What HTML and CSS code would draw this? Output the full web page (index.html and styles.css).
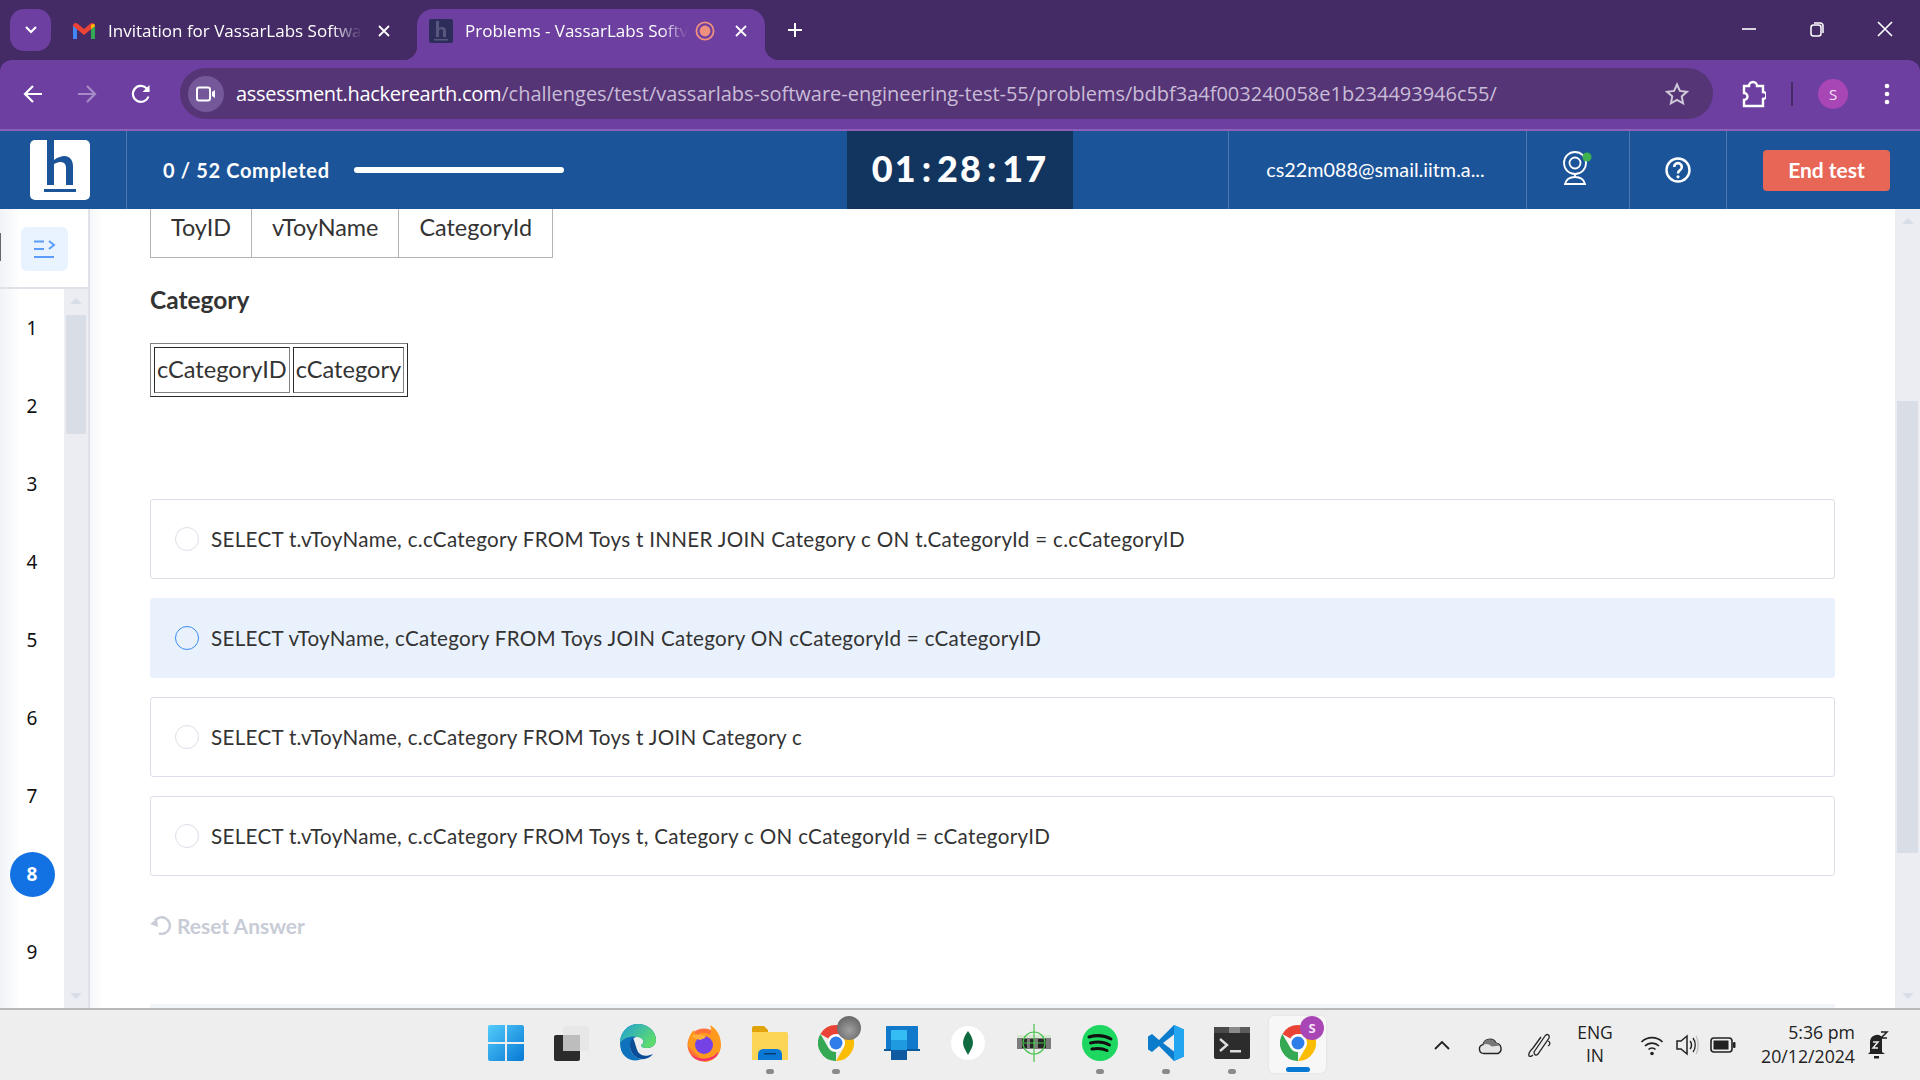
FILE: index.html
```html
<!DOCTYPE html>
<html lang="en">
<head>
<meta charset="utf-8">
<title>Problems - VassarLabs Software Engineering Test</title>
<link rel="stylesheet" href="styles.css">
</head>
<body>
<div class="tabstrip">
  <div class="tab-search"><svg width="14" height="10" viewBox="0 0 14 10"><path d="M2 2l5 5 5-5" fill="none" stroke="#fff" stroke-width="2.2"/></svg></div>
  <div class="tab">
    <svg class="tab-ico" width="24" height="18" viewBox="0 0 24 18"><path d="M1 17V4l4-1v14z" fill="#4285f4"/><path d="M23 17V4l-4-1v14z" fill="#34a853"/><path d="M1 4c0-3 3-4 5-2l6 5 6-5c2-2 5-1 5 2l-11 9z" fill="#ea4335"/><path d="M19 3c2-2 4-1 4 1l-4 3z" fill="#fbbc04"/></svg>
    <span class="tab-title">Invitation for VassarLabs Softwa</span>
    <svg class="tab-close" width="12" height="12" viewBox="0 0 12 12"><path d="M1 1l10 10M11 1L1 11" stroke="#fff" stroke-width="1.8"/></svg>
  </div>
  <div class="tab tab-active">
    <svg class="tab-ico" width="24" height="24" viewBox="0 0 24 24"><rect width="24" height="24" rx="2" fill="#2d2d5c"/><path d="M7 2h3v7c3-2 7-1 7 3v6h-3v-6c0-2-2-2-4-1v7H7z" fill="#58587f"/><rect x="5" y="20" width="14" height="1.500" fill="#58587f"/></svg>
    <span class="tab-title">Problems - VassarLabs Softv</span>
    <svg class="tab-rec" width="20" height="20" viewBox="0 0 20 20"><circle cx="10" cy="10" r="8.600" fill="none" stroke="#f0907f" stroke-width="1.800"/><circle cx="10" cy="10" r="5.400" fill="#f0907f"/></svg>
    <svg class="tab-close" width="12" height="12" viewBox="0 0 12 12"><path d="M1 1l10 10M11 1L1 11" stroke="#fff" stroke-width="1.8"/></svg>
  </div>
  <svg class="new-tab" width="18" height="18" viewBox="0 0 18 18"><path d="M9 2v14M2 9h14" stroke="#fff" stroke-width="2"/></svg>
  <div class="win-controls">
    <svg width="16" height="16" viewBox="0 0 16 16"><path d="M1 8h14" stroke="#fff" stroke-width="1.6"/></svg>
    <svg width="16" height="16" viewBox="0 0 16 16"><rect x="2" y="4" width="10" height="11" rx="2.500" fill="none" stroke="#fff" stroke-width="1.500"/><path d="M5 2h6a3 3 0 0 1 3 3v7" fill="none" stroke="#fff" stroke-width="1.500"/></svg>
    <svg width="16" height="16" viewBox="0 0 16 16"><path d="M1 1l14 14M15 1L1 15" stroke="#fff" stroke-width="1.6"/></svg>
  </div>
</div>

<div class="toolbar">
  <div class="nav">
    <svg width="22" height="22" viewBox="0 0 22 22"><path d="M20 11H3M11 3l-8 8 8 8" fill="none" stroke="#fff" stroke-width="2.2"/></svg>
    <svg width="22" height="22" viewBox="0 0 22 22"><path d="M2 11h17M11 3l8 8-8 8" fill="none" stroke="#a68cc6" stroke-width="2.2"/></svg>
    <svg width="22" height="22" viewBox="0 0 22 22"><path d="M18.500 13.500A8 8 0 1 1 16.500 5.200L19 8" fill="none" stroke="#fff" stroke-width="2.2"/><path d="M19.500 2v7h-7" fill="#fff"/></svg>
  </div>
  <div class="omnibox">
    <div class="cam"><svg width="20" height="16" viewBox="0 0 20 16"><rect x="1" y="1.500" width="13" height="13" rx="2" fill="none" stroke="#fff" stroke-width="2"/><path d="M16 6l3-2v8l-3-2z" fill="#fff"/></svg></div>
    <div class="url"><span class="url-host">assessment.hackerearth.com</span><span class="url-path">/challenges/test/vassarlabs-software-engineering-test-55/problems/bdbf3a4f003240058e1b234493946c55/</span></div>
    <svg class="star" width="24" height="24" viewBox="0 0 24 24"><path d="M12 2.500l2.900 6.400 7 .8-5.200 4.700 1.400 6.900-6.100-3.500-6.100 3.500 1.400-6.900-5.200-4.700 7-.8z" fill="none" stroke="#cfc8d8" stroke-width="2"/></svg>
  </div>
  <div class="tool-right">
    <svg class="ext" width="26" height="28" viewBox="0 0 26 28"><path d="M4 6h5a4 4 0 0 1 8 0h6v6a3.500 3.500 0 0 1 0 7v7H4v-6a3 3 0 0 0 0-7z" fill="none" stroke="#fff" stroke-width="2.400"/></svg>
    <span class="tool-sep"></span>
    <span class="avatar">S</span>
    <svg class="dots" width="6" height="22" viewBox="0 0 6 22"><circle cx="3" cy="3" r="2.300" fill="#fff"/><circle cx="3" cy="11" r="2.300" fill="#fff"/><circle cx="3" cy="19" r="2.300" fill="#fff"/></svg>
  </div>
</div>

<header class="app-header">
  <div class="logo-cell">
    <svg width="60" height="60" viewBox="0 0 60 60"><rect width="60" height="60" rx="5" fill="#fff"/><path d="M17 0h7v20c4-3 8-4 10-4 6 0 9 4 9 11v18h-7V28c0-4-2-6-6-6-2 0-4 1-6 2v21h-7z" fill="#1c5499"/><rect x="14" y="49" width="32" height="3" fill="#1c5499"/></svg>
  </div>
  <div class="progress-cell">
    <span class="progress-text">0 / 52 Completed</span>
    <span class="progress-bar"></span>
  </div>
  <div class="timer">01 : 28 : 17</div>
  <div class="spacer"></div>
  <div class="cell cell-email">cs22m088@smail.iitm.a...</div>
  <div class="cell cell-cam">
    <svg width="30" height="36" viewBox="0 0 30 36"><circle cx="12" cy="13" r="11" fill="none" stroke="#fff" stroke-width="1.800"/><circle cx="12" cy="13" r="5.500" fill="none" stroke="#fff" stroke-width="1.800"/><path d="M12 24v3M2 34c1-4 4-7 10-7s9 3 10 7z" fill="none" stroke="#fff" stroke-width="1.800"/><circle cx="24" cy="7" r="4.500" fill="#3fb24f"/></svg>
  </div>
  <div class="cell cell-help">
    <svg width="26" height="26" viewBox="0 0 26 26"><circle cx="13" cy="13" r="11.500" fill="none" stroke="#fff" stroke-width="2.400"/><path d="M9.200 10a3.800 3.800 0 1 1 5.800 3.200c-1.400.9-2 1.500-2 3.300" fill="none" stroke="#fff" stroke-width="2.600"/><circle cx="13" cy="19.800" r="1.600" fill="#fff"/></svg>
  </div>
  <div class="cell-end"><button class="end-btn">End test</button></div>
</header>

<div class="main">
  <aside class="sidebar">
    <div class="side-top">
      <div class="side-mark"></div>
      <div class="side-toggle"><svg width="22" height="18" viewBox="0 0 22 18"><path d="M0 1.500h10M0 9h10M0 17h20M15 1l5 4-5 4" fill="none" stroke="#5a9dfa" stroke-width="2"/></svg></div>
    </div>
    <div class="side-list">
      <ol class="q-nums">
        <li class="q-num">1</li>
        <li class="q-num">2</li>
        <li class="q-num">3</li>
        <li class="q-num">4</li>
        <li class="q-num">5</li>
        <li class="q-num">6</li>
        <li class="q-num">7</li>
        <li class="q-num q-current"><span>8</span></li>
        <li class="q-num">9</li>
      </ol>
      <div class="scroll scroll-side">
        <i class="arrow-up"></i>
        <b class="thumb thumb-side"></b>
        <i class="arrow-down"></i>
      </div>
    </div>
  </aside>

  <main class="content">
    <table class="toys">
      <tr><td>ToyID</td><td>vToyName</td><td>CategoryId</td></tr>
    </table>
    <h4 class="tbl-title">Category</h4>
    <table class="cat">
      <tr><td>cCategoryID</td><td>cCategory</td></tr>
    </table>
    <div class="options">
      <label class="opt"><span class="radio"></span>SELECT t.vToyName, c.cCategory FROM Toys t INNER JOIN Category c ON t.CategoryId = c.cCategoryID</label>
      <label class="opt opt-selected"><span class="radio"></span>SELECT vToyName, cCategory FROM Toys JOIN Category ON cCategoryId = cCategoryID</label>
      <label class="opt"><span class="radio"></span>SELECT t.vToyName, c.cCategory FROM Toys t JOIN Category c</label>
      <label class="opt"><span class="radio"></span>SELECT t.vToyName, c.cCategory FROM Toys t, Category c ON cCategoryId = cCategoryID</label>
    </div>
    <div class="reset">
      <svg width="22" height="20" viewBox="0 0 22 20"><path d="M5 5.500A8.300 8.300 0 1 1 9 18.500" fill="none" stroke="#c8ccd6" stroke-width="2.400"/><path d="M0 9l7-5 1 8z" fill="#c8ccd6"/></svg>
      <span>Reset Answer</span>
    </div>
    <div class="next-band"></div>
  </main>

  <div class="scroll scroll-main">
    <i class="arrow-up"></i>
    <b class="thumb thumb-main"></b>
    <i class="arrow-down"></i>
  </div>
</div>

<footer class="taskbar">
  <div class="task-icons">
    <div class="ti"><svg width="36" height="36" viewBox="0 0 36 36"><defs><linearGradient id="w" x1="0" y1="0" x2="1" y2="1"><stop offset="0" stop-color="#53ccfb"/><stop offset="1" stop-color="#0678d4"/></linearGradient></defs><path d="M0 2a2 2 0 0 1 2-2h15v17H0zM19 0h15a2 2 0 0 1 2 2v15H19zM0 19h17v17H2a2 2 0 0 1-2-2zM19 19h17v15a2 2 0 0 1-2 2H19z" fill="url(#w)"/></svg></div>
    <div class="ti"><svg width="36" height="36" viewBox="0 0 36 36"><rect x="0" y="10" width="26" height="26" rx="2" fill="#2b2b2b"/><rect x="9" y="1" width="26" height="25" rx="2" fill="#e6e6e6" fill-opacity=".9"/><rect x="9" y="10" width="17" height="16" fill="#bdbdbd"/></svg></div>
    <div class="ti"><svg width="36" height="38" viewBox="0 0 36 38"><defs><linearGradient id="e" x1="0" y1="0" x2="1" y2=".6"><stop offset="0" stop-color="#1f9fd8"/><stop offset="1" stop-color="#5fdc6c"/></linearGradient></defs><path d="M0 19C0 8 8 0 18 0c10 0 18 7 18 16 0 5-4 8-9 8-4 0-6-1-6-3 2-1 3-3 2-5-2-4-7-4-10-1C8 20 10 29 16 33c2 1 4 2 6 2C14 39 0 35 0 19z" fill="#0f72bd"/><path d="M0 19C0 8 8 0 18 0c10 0 18 7 18 16 0 5-4 8-9 8-4 0-6-1-6-3 2-1 3-3 2-5-4-5-17-5-23 3z" fill="url(#e)"/><path d="M13 14c-5 3-4 15 3 19 6 4 13 2 17-3-7 3-12 2-15-2-2-4-3-10-5-14z" fill="#0a4d96"/></svg></div>
    <div class="ti"><svg width="36" height="38" viewBox="0 0 36 38"><circle cx="18" cy="21" r="16.500" fill="#ff7139"/><path d="M2 22C2 12 6 8 8 6c0 3 2 5 4 5 3-3 9-3 12 0 2-3 1-7 0-10 7 4 11 11 11 20 0 10-8 17-17 17z" fill="#ff9a1f"/><path d="M5 30c6 6 20 7 27-2 1 3-5 9-14 9-6 0-11-3-13-7z" fill="#f2306f"/><circle cx="18" cy="21" r="9" fill="#7542e5"/><path d="M6 12c4-2 10-2 14 1-2 2-5 2-6 3-2-1-5-1-8-4z" fill="#ffb13b"/></svg></div>
    <div class="ti ti-running"><svg width="36" height="34" viewBox="0 0 36 34"><path d="M0 2a2 2 0 0 1 2-2h10l4 4v5H0z" fill="#e0a408"/><path d="M0 6h34a2 2 0 0 1 2 2v26H0z" fill="#fdd556"/><path d="M6 34v-5c0-4 2-6 6-6h12c4 0 6 2 6 6v5z" fill="#0a78d4"/><rect x="12" y="27" width="12" height="1.500" fill="#0a3d70"/></svg></div>
    <div class="ti ti-running ti-chrome">
      <svg width="36" height="36" viewBox="0 0 36 36"><path d="M18 0A18 18 0 0 1 33.600 9H18A9 9 0 0 0 10.200 13.500L2.400 9A18 18 0 0 1 18 0z" fill="#ea4335"/><path d="M18 0A18 18 0 0 1 33.600 9H18A9 9 0 0 0 10.200 13.500L2.400 9A18 18 0 0 1 18 0z" fill="#fbbc04" transform="rotate(120 18 18)"/><path d="M18 0A18 18 0 0 1 33.600 9H18A9 9 0 0 0 10.200 13.500L2.400 9A18 18 0 0 1 18 0z" fill="#34a853" transform="rotate(240 18 18)"/><circle cx="18" cy="18" r="8.500" fill="#fff"/><circle cx="18" cy="18" r="6.500" fill="#2f7de8"/></svg>
      <span class="ti-badge ti-badge-gray"></span>
    </div>
    <div class="ti"><svg width="36" height="34" viewBox="0 0 36 34"><path d="M2 1a1 1 0 0 1 1-1h30a1 1 0 0 1 1 1v23H2z" fill="#1079c9"/><rect x="0" y="23" width="36" height="2" fill="#0b5a9e"/><rect x="7" y="4" width="16" height="30" rx="1" fill="#34bdf4"/><rect x="7" y="14" width="16" height="10" fill="#1e9be0"/><rect x="7" y="24" width="16" height="10" fill="#0f5aa0"/></svg></div>
    <div class="ti"><svg width="36" height="36" viewBox="0 0 36 36"><circle cx="18" cy="18" r="17" fill="#fff"/><path d="M18 6c3 4 5 8 5 12s-3 8-5 12c-2-4-5-8-5-12s2-8 5-12z" fill="#0e6b40"/></svg></div>
    <div class="ti"><svg width="36" height="38" viewBox="0 0 36 38"><path d="M1 14h34v11H1z" fill="#7c7c7c"/><path d="M1 11h34v3H1z" fill="#d8e8d0"/><path d="M6 15h5v9H6zM14 15h4v9h-4zM22 15h8v9h-8z" fill="#262626"/><circle cx="18" cy="19" r="11" fill="none" stroke="#49c34f" stroke-width="1.200"/><path d="M18 0v38M8 19h20" stroke="#49c34f" stroke-width="1.200"/></svg></div>
    <div class="ti ti-running"><svg width="36" height="36" viewBox="0 0 36 36"><circle cx="18" cy="18" r="18" fill="#1ed760"/><path d="M7 12c7-2 15-2 22 2M8.500 18c6-1.500 13-1.500 19 2M10 24c5-1 10-1 15 1.500" fill="none" stroke="#111" stroke-width="3" stroke-linecap="round"/></svg></div>
    <div class="ti ti-running"><svg width="36" height="36" viewBox="0 0 36 36"><path d="M26 0l10 4.500v27L26 36 11 21l-7 6-4-2.500v-13L4 9l7 6z" fill="#0a7ccb"/><path d="M26 0l10 4.500v27L26 36z" fill="#24a5f0"/><path d="M26 9.500L15 18l11 8.500z" fill="#efefef"/></svg></div>
    <div class="ti ti-running"><svg width="36" height="32" viewBox="0 0 36 32"><rect width="36" height="32" rx="2" fill="#2c2c2c"/><rect x="0" width="15" height="6" fill="#4a4a4a"/><rect x="15" width="11" height="6" fill="#8a8a8a"/><rect x="26" width="10" height="6" fill="#5c5c5c"/><path d="M6 12l7 6-7 6" fill="none" stroke="#ddd" stroke-width="2.400"/><rect x="16" y="23" width="11" height="2.500" fill="#ddd"/></svg></div>
    <div class="ti ti-active">
      <svg width="36" height="36" viewBox="0 0 36 36"><path d="M18 0A18 18 0 0 1 33.600 9H18A9 9 0 0 0 10.200 13.500L2.400 9A18 18 0 0 1 18 0z" fill="#ea4335"/><path d="M18 0A18 18 0 0 1 33.600 9H18A9 9 0 0 0 10.200 13.500L2.400 9A18 18 0 0 1 18 0z" fill="#fbbc04" transform="rotate(120 18 18)"/><path d="M18 0A18 18 0 0 1 33.600 9H18A9 9 0 0 0 10.200 13.500L2.400 9A18 18 0 0 1 18 0z" fill="#34a853" transform="rotate(240 18 18)"/><circle cx="18" cy="18" r="8.500" fill="#fff"/><circle cx="18" cy="18" r="6.500" fill="#2f7de8"/></svg>
      <span class="ti-badge ti-badge-s">S</span>
    </div>
  </div>
  <div class="tray">
    <svg class="tr-chev" width="18" height="12" viewBox="0 0 18 12"><path d="M2 10l7-7 7 7" fill="none" stroke="#222" stroke-width="1.800"/></svg>
    <svg class="tr-cloud" width="26" height="20" viewBox="0 0 26 20"><path d="M6 18.500a4.500 4.500 0 0 1-1-8.900 7 7 0 0 1 13-1.500 5.500 5.500 0 0 1 2 10.400z" fill="#e4e4e4" stroke="#222" stroke-width="1.400"/><path d="M5 9.600a7 7 0 0 1 13-1.500c2 .3 3 1.200 4 2.400l-8 1-3-2c-2-1-4-.5-6 .1z" fill="#777"/></svg>
    <svg class="tr-pen" width="26" height="28" viewBox="0 0 26 28"><path d="M7 21L18 5c2-3 5-1 4 2L11 23c-2 2-4 1-4-2zM6 24c-2 2-5 2-4-1 0-2 2-4 4-6L14 6M21 10c3 1 2 4 0 5" fill="none" stroke="#222" stroke-width="1.300"/></svg>
    <div class="tr-lang"><span>ENG</span><span>IN</span></div>
    <div class="tr-sys">
      <svg width="24" height="22" viewBox="0 0 24 22"><path d="M1.500 8a15 15 0 0 1 21 0M5 12a10 10 0 0 1 14 0M8.500 15.500a5 5 0 0 1 7 0" fill="none" stroke="#222" stroke-width="1.700"/><circle cx="12" cy="19.500" r="1.800" fill="#222"/></svg>
      <svg width="24" height="24" viewBox="0 0 24 24"><path d="M2 8h4l6-5v18l-6-5H2z" fill="none" stroke="#222" stroke-width="1.500"/><path d="M15 8c2 2 2 6 0 8" fill="none" stroke="#222" stroke-width="1.500"/><path d="M18 5c3 4 3 10 0 14" fill="none" stroke="#222" stroke-width="1.300"/><path d="M21 3c3 5 3 13 0 18" fill="none" stroke="#bbb" stroke-width="1.200"/></svg>
      <svg width="26" height="16" viewBox="0 0 26 16"><rect x="1" y="1" width="21" height="14" rx="3" fill="none" stroke="#222" stroke-width="1.600"/><rect x="3.500" y="3.500" width="15" height="9" fill="#222"/><rect x="23" y="5" width="2.500" height="6" rx="1" fill="#222"/></svg>
    </div>
    <div class="tr-clock"><span>5:36 pm</span><span>20/12/2024</span></div>
    <svg class="tr-bell" width="22" height="30" viewBox="0 0 22 30"><path d="M3 22V12a7 7 0 0 1 12-5v15l3 2H1z" fill="#222"/><rect x="7" y="26" width="5" height="2.500" fill="#222"/><path d="M14 2h6l-6 6h6" fill="none" stroke="#222" stroke-width="1.500"/><path d="M6 12h5l-5 6h5" fill="none" stroke="#eee" stroke-width="1.500"/></svg>
  </div>
</footer>
</body>
</html>
```

FILE: styles.css
```css
* { box-sizing: border-box; }
html, body { margin: 0; padding: 0; }
body {
  width: 1920px;
  height: 1080px;
  overflow: hidden;
  display: flex;
  flex-direction: column;
  font-family: "Lato", "Liberation Sans", sans-serif;
  background: #452b66;
}

/* browser tab strip */
.tabstrip {
  height: 60px;
  flex: none;
  background: #452b66;
  display: flex;
  align-items: flex-start;
  padding: 9px 0 0 10px;
  font-family: "Open Sans", "Liberation Sans", sans-serif;
}
.tab-search {
  width: 41px;
  height: 42px;
  border-radius: 14px;
  background: #6c3fa0;
  display: flex;
  align-items: center;
  justify-content: center;
  margin-right: 21px;
}
.tab {
  width: 345px;
  height: 51px;
  flex: none;
  display: flex;
  align-items: center;
  color: #fff;
  padding: 0 27px 8px 0;
}
.tab-ico { flex: none; }
.tab-title {
  white-space: nowrap;
  font-size: 17px;
  margin-left: 12px;
  -webkit-mask-image: linear-gradient(90deg, #000 88%, transparent 100%);
  mask-image: linear-gradient(90deg, #000 88%, transparent 100%);
}
.tab-close { flex: none; margin-left: auto; }
.tab-active {
  width: 348px;
  position: relative;
  background: #6c3fa0;
  border-radius: 16px 16px 0 0;
  padding: 0 18px 8px 12px;
  margin-right: 21px;
}
.tab-active::before,
.tab-active::after {
  content: "";
  position: absolute;
  bottom: 0;
  width: 14px;
  height: 14px;
}
.tab-active::before {
  left: -14px;
  background: radial-gradient(circle at 0 0, transparent 14px, #6c3fa0 14.5px);
}
.tab-active::after {
  right: -14px;
  background: radial-gradient(circle at 100% 0, transparent 14px, #6c3fa0 14.5px);
}
.tab-active .tab-title { margin-left: 12px; }
.tab-rec { flex: none; margin-left: auto; }
.tab-active .tab-close { margin-left: 20px; }
.new-tab { margin-top: 12px; flex: none; }
.win-controls {
  margin-left: auto;
  display: flex;
  gap: 52px;
  padding: 12px 27px 0 0;
}

/* browser toolbar */
.toolbar {
  height: 71px;
  flex: none;
  background: #6c3fa0;
  border-bottom: 2px solid #8d5fb6;
  border-radius: 12px 12px 0 0;
  display: flex;
  align-items: center;
  padding: 0 0 2px 22px;
  font-family: "Open Sans", "Liberation Sans", sans-serif;
}
.nav {
  display: flex;
  gap: 32px;
  width: 158px;
  flex: none;
}
.omnibox {
  width: 1533px;
  height: 51px;
  flex: none;
  border-radius: 26px;
  background: #553575;
  display: flex;
  align-items: center;
  padding: 0 24px 0 8px;
}
.cam {
  width: 36px;
  height: 36px;
  border-radius: 50%;
  background: #75589a;
  display: flex;
  align-items: center;
  justify-content: center;
  flex: none;
}
.url {
  margin-left: 12px;
  font-size: 20px;
  white-space: nowrap;
  flex: 1;
}
.url-host { color: #fff; letter-spacing: -.3px; }
.url-path { color: #c9bcd8; letter-spacing: -.01px; }
.star { flex: none; }
.tool-right {
  flex: 1;
  display: flex;
  align-items: center;
  padding-left: 27px;
}
.ext { flex: none; }
.tool-sep { width: 2px; height: 24px; background: #452b66; margin-left: 25px; }
.avatar {
  width: 30px;
  height: 30px;
  border-radius: 50%;
  background: #a946b6;
  color: #f5e2f7;
  font-size: 15px;
  display: flex;
  align-items: center;
  justify-content: center;
  margin-left: 25px;
}
.dots { margin-left: 36px; flex: none; }

/* app header */
.app-header {
  height: 78px;
  flex: none;
  background: #1c5499;
  display: flex;
  color: #fff;
}
.logo-cell {
  width: 127px;
  flex: none;
  border-right: 1px solid #4b78b0;
  padding: 9px 0 0 30px;
}
.progress-cell {
  width: 720px;
  flex: none;
  display: flex;
  align-items: center;
  padding: 0 0 1px 36px;
  gap: 24px;
}
.progress-text { font-size: 20px; font-weight: 700; letter-spacing: .65px; }
.progress-bar { width: 210px; height: 6px; background: #fff; border-radius: 3px; }
.timer {
  width: 226px;
  flex: none;
  background: #12355f;
  font-size: 36px;
  font-weight: 900;
  letter-spacing: 2px;
  word-spacing: -6.5px;
  text-align: center;
  line-height: 74px;
  white-space: nowrap;
}
.spacer { flex: 1; }
.cell {
  height: 100%;
  flex: none;
  border-left: 1px solid #4b78b0;
  display: flex;
  align-items: center;
  justify-content: center;
}
.cell-email { width: 298px; font-size: 19.8px; padding: 0 4px 2px 0; }
.cell-cam { width: 103px; padding-bottom: 4px; }
.cell-help { width: 97px; }
.cell-end {
  width: 194px;
  flex: none;
  border-left: 1px solid #4b78b0;
  padding: 19px 0 0 36px;
}
.end-btn {
  display: block;
  width: 127px;
  height: 41px;
  border: 0;
  border-radius: 4px;
  background: #e76656;
  color: #fff;
  font-family: inherit;
  font-size: 21px;
  font-weight: 700;
  padding: 0 0 3px;
}

/* body */
.main {
  flex: 1;
  min-height: 0;
  display: flex;
  overflow: hidden;
  background: #fff;
}
.sidebar {
  width: 90px;
  flex: none;
  display: flex;
  flex-direction: column;
  border-right: 2px solid #dfe2e9;
  background: linear-gradient(90deg, #f1f3f8 0, #fff 20px);
}
.side-top {
  height: 80px;
  flex: none;
  position: relative;
  border-bottom: 2px solid #dfe2e9;
  padding: 18px 0 0 21px;
}
.side-mark {
  position: absolute;
  left: 0;
  top: 24px;
  width: 1px;
  height: 28px;
  background: #666;
}
.side-toggle {
  width: 47px;
  height: 44px;
  border-radius: 6px;
  background: #e9f2ff;
  display: flex;
  align-items: center;
  justify-content: center;
}
.side-list {
  flex: 1;
  min-height: 0;
  display: flex;
}
.q-nums {
  flex: 1;
  list-style: none;
  margin: 0;
  padding: 0;
}
.q-num {
  height: 78px;
  display: flex;
  align-items: center;
  justify-content: center;
  font-family: "Noto Sans", "Liberation Sans", sans-serif;
  font-size: 19px;
  color: #111;
}
.q-current span {
  width: 45px;
  height: 45px;
  border-radius: 50%;
  background: #1271e3;
  color: #fff;
  font-weight: 700;
  display: flex;
  align-items: center;
  justify-content: center;
}
.scroll {
  background: #ecedf2;
  flex: none;
  position: relative;
}
.scroll-side { width: 24px; }
.scroll-main { width: 25px; }
.thumb {
  position: absolute;
  display: block;
  background: #d9dde6;
}
.thumb-side { left: 2px; right: 2px; top: 26px; height: 119px; }
.thumb-main { left: 2px; right: 2px; top: 192px; height: 452px; }
.arrow-up, .arrow-down {
  position: absolute;
  left: 50%;
  margin-left: -6px;
  width: 0;
  height: 0;
  border-left: 6px solid transparent;
  border-right: 6px solid transparent;
}
.arrow-up { top: 9px; border-bottom: 6px solid #d9dde6; }
.arrow-down { bottom: 9px; border-top: 6px solid #d9dde6; }

.content {
  flex: 1;
  min-width: 0;
  position: relative;
  padding: 0 60px;
  color: #333;
  overflow: hidden;
  background: linear-gradient(90deg, #f6f7fa 0, #fff 12px);
}
.toys {
  border-collapse: collapse;
  font-size: 23.4px;
}
.toys td {
  height: 48px;
  padding: 0 20px 12px;
  border: 1px solid #b4b4b4;
  border-top: 0;
}
.tbl-title {
  margin: 27px 0 0;
  font-size: 24.5px;
  font-weight: 700;
  line-height: 30px;
}
.cat {
  margin-top: 28px;
  font-size: 23.6px;
  border-spacing: 3px;
  border: 1px solid;
  border-color: #808080 #2a2a2a #2a2a2a #808080;
}
.cat td {
  padding: 0 2px 2px;
  height: 46px;
  border: 1px solid;
  border-color: #2a2a2a #808080 #808080 #2a2a2a;
}
.options {
  margin-top: 102px;
  width: 1685px;
  display: flex;
  flex-direction: column;
  gap: 19px;
}
.opt {
  height: 80px;
  border: 1px solid #dcdfe8;
  border-radius: 3px;
  display: flex;
  align-items: center;
  padding-left: 24px;
  font-size: 20.6px;
  letter-spacing: .3px;
  white-space: nowrap;
}
.opt-selected {
  background: #e9f1fd;
  border-color: #e9f1fd;
}
.radio {
  width: 24px;
  height: 24px;
  border-radius: 50%;
  border: 1px solid #dcdfe8;
  background: #fff;
  margin-right: 12px;
  flex: none;
}
.opt-selected .radio {
  border-color: #3b8cf5;
  background: transparent;
}
.reset {
  margin-top: 37px;
  display: flex;
  align-items: center;
  gap: 5px;
  color: #c8ccd6;
  font-size: 21px;
  font-weight: 700;
}
.next-band {
  position: absolute;
  left: 60px;
  bottom: 0;
  width: 1685px;
  height: 4px;
  background: #f2f5f9;
}

/* windows taskbar */
.taskbar {
  height: 72px;
  flex: none;
  background: #eeeeee;
  border-top: 2px solid #b9b9b9;
  display: flex;
  align-items: flex-start;
  padding: 6px 0 0 477px;
  font-family: "Open Sans", "Liberation Sans", sans-serif;
  color: #222;
}
.task-icons { display: flex; gap: 9px; }
.ti {
  width: 57px;
  height: 57px;
  flex: none;
  display: flex;
  align-items: center;
  justify-content: center;
  position: relative;
  padding-bottom: 3px;
}
.ti-running::after {
  content: "";
  position: absolute;
  left: 50%;
  bottom: -1px;
  width: 8px;
  height: 5px;
  margin-left: -4px;
  border-radius: 3px;
  background: #8a8a8a;
}
.ti-active {
  background: #f7f7f7;
  border-radius: 5px;
  box-shadow: 0 0 2px #d8d8d8;
}
.ti-active::after {
  content: "";
  position: absolute;
  left: 50%;
  bottom: 1px;
  width: 24px;
  height: 5px;
  margin-left: -12px;
  border-radius: 3px;
  background: #0678d4;
}
.ti-badge {
  position: absolute;
  border-radius: 50%;
}
.ti-badge-gray {
  width: 24px;
  height: 24px;
  right: 3px;
  top: 0;
  background: radial-gradient(circle at 50% 60%, #a0a0a0, #555);
}
.ti-badge-s {
  width: 24px;
  height: 24px;
  right: 2px;
  top: 0;
  background: #a946b6;
  color: #f5e2f7;
  font-size: 13px;
  font-weight: 700;
  text-align: center;
  line-height: 24px;
}
.tray {
  display: flex;
  align-items: center;
  height: 58px;
  margin-left: 107px;
}
.tr-chev { margin-right: 27px; flex: none; }
.tr-cloud { margin-right: 23px; flex: none; }
.tr-pen { margin-right: 22px; flex: none; }
.tr-lang {
  display: flex;
  flex-direction: column;
  align-items: center;
  font-size: 17.5px;
  line-height: 23px;
  width: 40px;
  margin-top: -2px;
}
.tr-sys {
  display: flex;
  align-items: center;
  gap: 11px;
  margin-left: 25px;
}
.tr-clock {
  display: flex;
  flex-direction: column;
  align-items: flex-end;
  width: 100px;
  margin-left: 19px;
  font-size: 17.7px;
  line-height: 24px;
  white-space: nowrap;
  margin-top: -2px;
}
.tr-bell { margin-left: 12px; flex: none; }
```
